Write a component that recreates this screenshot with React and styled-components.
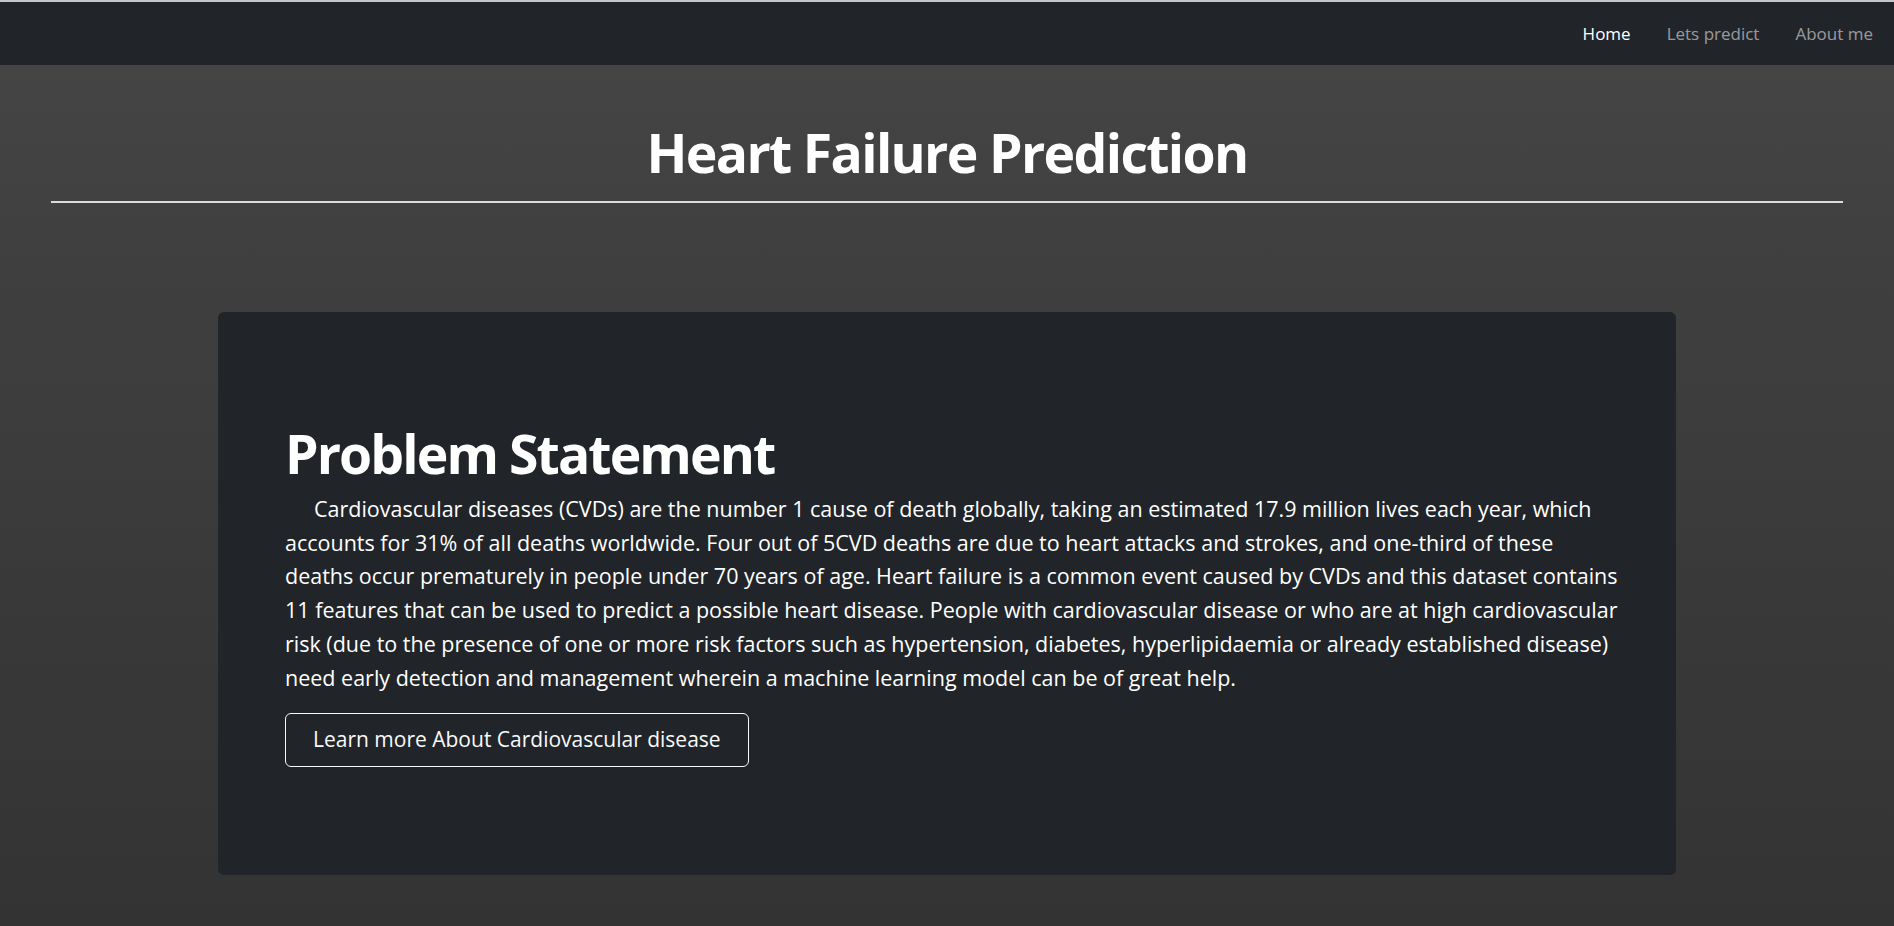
import React from "react";
import styled, { createGlobalStyle } from "styled-components";

const Global = createGlobalStyle`
  html, body { margin: 0; padding: 0; background: #333333; }
  body {
    font-family: "Open Sans", "Noto Sans", sans-serif;
    color: #ffffff;
  }
`;

const Page = styled.div`
  min-height: 100vh;
  box-sizing: border-box;
  border-top: 2px solid #c6c7c8;
  background: linear-gradient(180deg, #464646 0%, #3f3f3f 30%, #333333 100%);
  display: flex;
  flex-direction: column;
`;

const Navbar = styled.nav`
  height: 63px;
  background: #212529;
  display: flex;
  align-items: center;
  justify-content: flex-end;
  gap: 36px;
  padding-right: 21px;
`;

const NavLink = styled.a`
  font-size: 17px;
  color: ${(p) => (p.$active ? "#ffffff" : "rgba(255, 255, 255, 0.55)")};
  text-decoration: none;
`;

const Header = styled.header`
  padding: 56px 51px 0;
`;

const Title = styled.h1`
  margin: 0;
  text-align: center;
  font-size: 53.5px;
  line-height: 64px;
  font-weight: 700;
  letter-spacing: -1.65px;
`;

const Rule = styled.hr`
  margin: 16px 0 0;
  border: 0;
  height: 2px;
  background: rgba(255, 255, 255, 0.82);
`;

const Card = styled.section`
  width: 1458px;
  margin: 109px auto 0;
  box-sizing: border-box;
  background: #212529;
  border-radius: 6px;
  padding: 110px 40px 108px 67px;
  display: flex;
  flex-direction: column;
  align-items: flex-start;
`;

const Heading = styled.h2`
  margin: 0;
  font-size: 53.5px;
  line-height: 64px;
  font-weight: 700;
  letter-spacing: -1.9px;
`;

const Body = styled.p`
  margin: 6px 0 0;
  font-size: 21.5px;
  line-height: 33.7px;
  text-indent: 29px;
  white-space: nowrap;
`;

const Button = styled.a`
  margin-top: 19px;
  padding: 9px 27px;
  border: 1px solid #f8f9fa;
  border-radius: 6px;
  font-size: 21px;
  line-height: 33.5px;
  color: #f8f9fa;
  text-decoration: none;
`;

export default function App() {
  return (
    <>
      <Global />
      <Page>
        <Navbar>
          <NavLink href="#" $active>Home</NavLink>
          <NavLink href="#">Lets predict</NavLink>
          <NavLink href="#">About me</NavLink>
        </Navbar>
        <Header>
          <Title>Heart Failure Prediction</Title>
          <Rule />
        </Header>
        <Card>
          <Heading>Problem Statement</Heading>
          <Body>
            Cardiovascular diseases (CVDs) are the number 1 cause of death globally, taking an estimated 17.9 million lives each year, which
            <br />
            accounts for 31% of all deaths worldwide. Four out of 5CVD deaths are due to heart attacks and strokes, and one-third of these
            <br />
            deaths occur prematurely in people under 70 years of age. Heart failure is a common event caused by CVDs and this dataset contains
            <br />
            11 features that can be used to predict a possible heart disease. People with cardiovascular disease or who are at high cardiovascular
            <br />
            risk (due to the presence of one or more risk factors such as hypertension, diabetes, hyperlipidaemia or already established disease)
            <br />
            need early detection and management wherein a machine learning model can be of great help.
          </Body>
          <Button href="#">Learn more About Cardiovascular disease</Button>
        </Card>
      </Page>
    </>
  );
}
